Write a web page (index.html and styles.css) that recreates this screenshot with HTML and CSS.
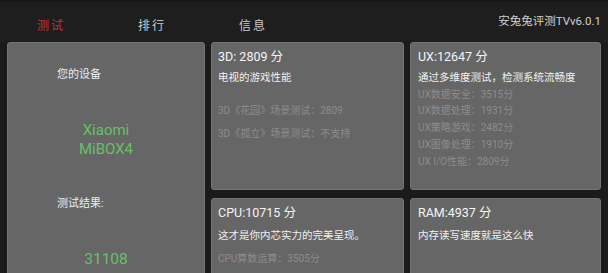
FILE: index.html
```html
<!DOCTYPE html>
<html lang="zh">
<head>
<meta charset="utf-8">
<link rel="stylesheet" href="styles.css">
</head>
<body>
<div class="app">
  <header class="top">
    <nav class="tabs">
      <span class="tab active">测试</span>
      <span class="tab">排行</span>
      <span class="tab">信息</span>
    </nav>
    <div class="brand">安兔兔评测TVv6.0.1</div>
  </header>
  <main class="grid">
    <section class="panel device">
      <div class="label">您的设备</div>
      <div class="model">Xiaomi<br>MiBOX4</div>
      <div class="label result">测试结果:</div>
      <div class="score">31108</div>
    </section>
    <section class="panel card c3d">
      <div class="title">3D: 2809 分</div>
      <div class="desc">电视的游戏性能</div>
      <ul class="items items3d">
        <li>3D《花园》场景测试：2809</li>
        <li>3D《孤立》场景测试：不支持</li>
      </ul>
    </section>
    <section class="panel card cux">
      <div class="title">UX:12647 分</div>
      <div class="desc">通过多维度测试，检测系统流畅度</div>
      <ul class="items itemsux">
        <li>UX数据安全：3515分</li>
        <li>UX数据处理：1931分</li>
        <li>UX策略游戏：2482分</li>
        <li>UX图像处理：1910分</li>
        <li>UX I/O性能：2809分</li>
      </ul>
    </section>
    <section class="panel card ccpu">
      <div class="title">CPU:10715 分</div>
      <div class="desc">这才是你内芯实力的完美呈现。</div>
      <ul class="items itemscpu">
        <li>CPU算数运算：3505分</li>
      </ul>
    </section>
    <section class="panel card cram">
      <div class="title">RAM:4937 分</div>
      <div class="desc">内存读写速度就是这么快</div>
    </section>
  </main>
</div>
</body>
</html>
```
FILE: styles.css
```css
html, body {
  margin: 0;
  padding: 0;
  background: #1b1b1b;
  overflow: hidden;
}
body {
  width: 608px;
  height: 273px;
  font-family: "Roboto", "Noto Sans CJK SC", sans-serif;
  color: #f0f0f0;
}
.app {
  width: 608px;
  height: 273px;
  overflow: hidden;
}
.top {
  height: 42px;
  display: flex;
  justify-content: space-between;
  background: #1e1e1e;
  border-top: 2px solid #161616;
  box-sizing: border-box;
}
.tabs {
  display: flex;
  padding-left: 37px;
  padding-top: 16px;
}
.tab {
  font-size: 12px;
  line-height: 16px;
  letter-spacing: 2px;
  color: #c8c8c8;
  width: 101px;
}
.tab.active {
  color: #c4342c;
}
.brand {
  font-size: 11.5px;
  line-height: 16px;
  color: #cfcfcf;
  padding-top: 11px;
  padding-right: 7px;
}
.grid {
  display: grid;
  grid-template-columns: 198px 193px 191px;
  grid-template-rows: 148px 100px;
  column-gap: 6px;
  row-gap: 8px;
  padding-left: 7px;
}
.panel {
  background: #666666;
  border: 1px solid #747474;
  border-radius: 3px;
  box-sizing: border-box;
}
.device {
  grid-row: 1 / span 2;
  padding-top: 24px;
}
.label {
  font-size: 11px;
  line-height: 16px;
  color: #ececec;
  padding-left: 49px;
}
.model {
  margin-top: 38px;
  font-size: 15px;
  line-height: 19px;
  color: #66c066;
  text-align: center;
}
.result {
  margin-top: 37px;
}
.score {
  margin-top: 37px;
  font-size: 15.5px;
  line-height: 20px;
  color: #66c066;
  text-align: center;
}
.card {
  padding: 5px 6px 0 6px;
}
.cux, .cram {
  padding-left: 7px;
}
.title {
  font-size: 12.5px;
  line-height: 18px;
  color: #f4f4f4;
}
.desc {
  margin-top: 4px;
  font-size: 10.5px;
  line-height: 16px;
  color: #f0f0f0;
}
.items {
  list-style: none;
  margin: 0;
  padding: 0;
  font-size: 10px;
  color: #8c8c8c;
  white-space: nowrap;
}
.items3d {
  margin-top: 16.7px;
}
.items3d li {
  line-height: 16px;
  margin-bottom: 7.3px;
}
.itemsux {
  margin-top: 0.7px;
}
.itemsux li {
  line-height: 16.7px;
}
.ccpu .desc, .cram .desc {
  margin-top: 6px;
}
.itemscpu {
  margin-top: 7px;
}
.itemscpu li {
  line-height: 16px;
}
```
